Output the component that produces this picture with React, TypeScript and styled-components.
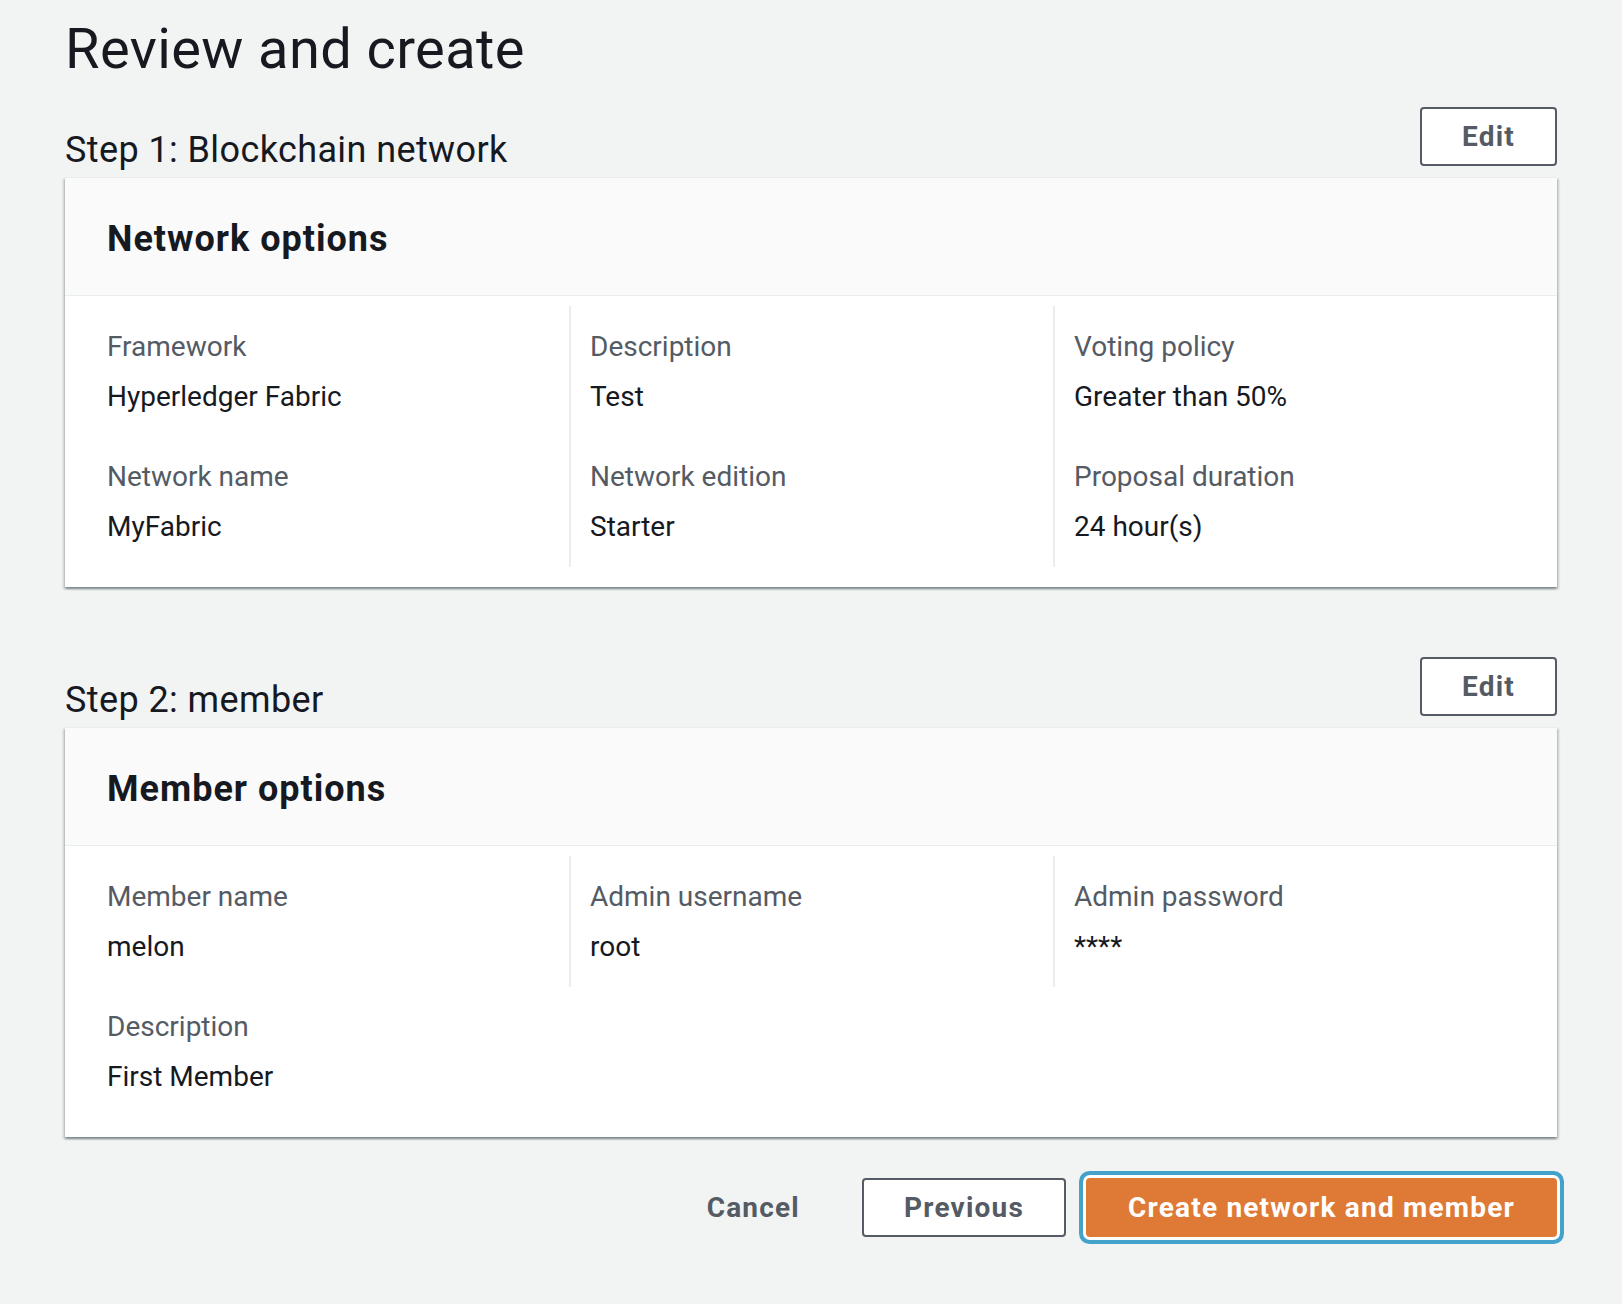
import React from 'react'
import styled, { createGlobalStyle } from 'styled-components'

const GlobalStyle = createGlobalStyle`
  html, body {
    margin: 0;
    padding: 0;
    background: #f2f3f3;
  }
  body {
    font-family: Roboto, "Liberation Sans", Arial, sans-serif;
    color: #16191f;
    -webkit-font-smoothing: antialiased;
  }
`

const Page = styled.main`
  padding: 13px 65px 60px;
  min-height: 1304px;
  box-sizing: border-box;
`

const Title = styled.h1`
  margin: 0;
  font-size: 56px;
  line-height: 72px;
  font-weight: 400;
  letter-spacing: 0.4px;
  color: #16191f;
`

const Section = styled.section`
  margin-top: 22px;

  & + & {
    margin-top: 70px;
  }
`

const SectionHeader = styled.div`
  display: flex;
  justify-content: space-between;
  align-items: flex-end;
  margin-bottom: 11px;
`

const StepTitle = styled.h2`
  margin: 0 0 -2px;
  font-size: 36px;
  line-height: 36px;
  font-weight: 400;
  letter-spacing: 0.4px;
  color: #16191f;
`

const Button = styled.button<{ $variant?: 'normal' | 'primary' | 'link' }>`
  box-sizing: border-box;
  height: 59px;
  padding: 0 40px;
  border-radius: 4px;
  border: 2px solid
    ${(p) =>
      p.$variant === 'primary' ? '#df7a36' : p.$variant === 'link' ? 'transparent' : '#545b64'};
  background: ${(p) =>
    p.$variant === 'primary' ? '#df7a36' : p.$variant === 'link' ? 'transparent' : '#ffffff'};
  color: ${(p) => (p.$variant === 'primary' ? '#ffffff' : '#545b64')};
  font-family: inherit;
  font-size: 28px;
  font-weight: 700;
  letter-spacing: 1.2px;
  cursor: pointer;
  box-shadow: ${(p) =>
    p.$variant === 'primary' ? '0 0 0 3px #ffffff, 0 0 0 7px #44a1c9' : 'none'};
`

const Card = styled.div`
  background: #ffffff;
  border-top: 1px solid #eaeded;
  box-shadow: 0 2px 2px 0 rgba(0, 28, 36, 0.3), 2px 2px 2px 0 rgba(0, 28, 36, 0.15),
    -2px 2px 2px 0 rgba(0, 28, 36, 0.15);
`

const CardHeader = styled.div`
  height: 118px;
  display: flex;
  align-items: center;
  padding: 4px 42px 0;
  box-sizing: border-box;
  background: #fafafa;
  border-bottom: 1px solid #eaeded;
`

const CardTitle = styled.h3`
  margin: 0;
  font-size: 36px;
  line-height: 44px;
  font-weight: 700;
  letter-spacing: 1px;
  color: #16191f;
`

const CardBody = styled.div`
  display: grid;
  grid-template-columns: repeat(3, 1fr);
  align-items: start;
  padding: 10px 20px 20px;
`

const Column = styled.div`
  display: flex;
  flex-direction: column;
  gap: 40px;
  padding: 21px 0 20px 22px;

  & + & {
    border-left: 2px solid #eaeded;
    padding-left: 19px;
  }
`

const Field = styled.div`
  display: flex;
  flex-direction: column;
  gap: 10px;
`

const Label = styled.div`
  font-size: 28px;
  line-height: 40px;
  color: #545b64;
`

const Value = styled.div`
  font-size: 28px;
  line-height: 40px;
  color: #16191f;
`

const Actions = styled.div`
  display: flex;
  justify-content: flex-end;
  align-items: center;
  gap: 20px;
  margin-top: 41px;
`

type Item = { label: string; value: string }

interface ReviewSectionProps {
  step: string
  title: string
  columns: Item[][]
}

const ReviewSection: React.FC<ReviewSectionProps> = ({ step, title, columns }) => (
  <Section>
    <SectionHeader>
      <StepTitle>{step}</StepTitle>
      <Button>Edit</Button>
    </SectionHeader>
    <Card>
      <CardHeader>
        <CardTitle>{title}</CardTitle>
      </CardHeader>
      <CardBody>
        {columns.map((col, i) => (
          <Column key={i}>
            {col.map((item) => (
              <Field key={item.label}>
                <Label>{item.label}</Label>
                <Value>{item.value}</Value>
              </Field>
            ))}
          </Column>
        ))}
      </CardBody>
    </Card>
  </Section>
)

const networkColumns: Item[][] = [
  [
    { label: 'Framework', value: 'Hyperledger Fabric' },
    { label: 'Network name', value: 'MyFabric' }
  ],
  [
    { label: 'Description', value: 'Test' },
    { label: 'Network edition', value: 'Starter' }
  ],
  [
    { label: 'Voting policy', value: 'Greater than 50%' },
    { label: 'Proposal duration', value: '24 hour(s)' }
  ]
]

const memberColumns: Item[][] = [
  [
    { label: 'Member name', value: 'melon' },
    { label: 'Description', value: 'First Member' }
  ],
  [{ label: 'Admin username', value: 'root' }],
  [{ label: 'Admin password', value: '****' }]
]

export default function App() {
  return (
    <>
      <GlobalStyle />
      <Page>
        <Title>Review and create</Title>
        <ReviewSection
          step="Step 1: Blockchain network"
          title="Network options"
          columns={networkColumns}
        />
        <ReviewSection step="Step 2: member" title="Member options" columns={memberColumns} />
        <Actions>
          <Button $variant="link">Cancel</Button>
          <Button>Previous</Button>
          <Button $variant="primary">Create network and member</Button>
        </Actions>
      </Page>
    </>
  )
}
